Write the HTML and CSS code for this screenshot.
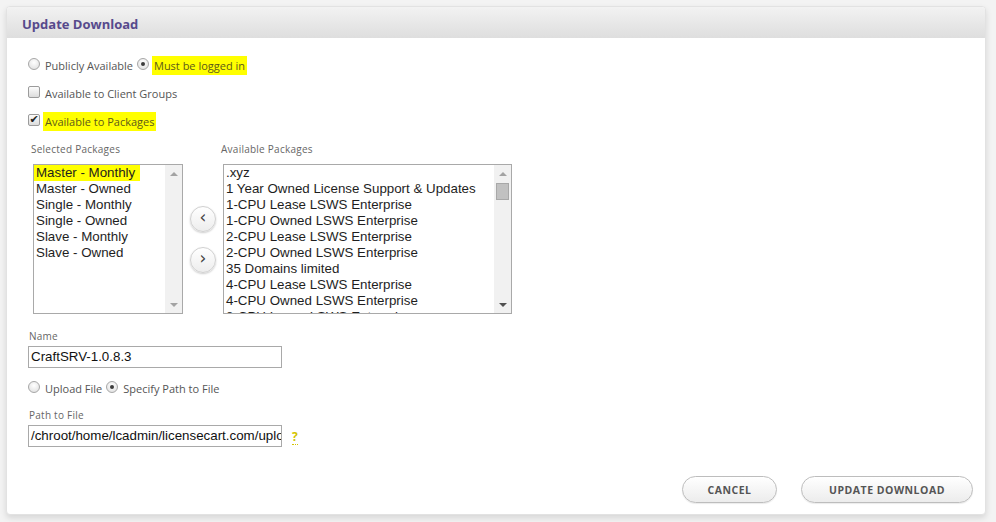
FILE: index.html
```html
<!DOCTYPE html>
<html>
<head>
<meta charset="utf-8">
<title>Update Download</title>
<link rel="stylesheet" href="styles.css">
</head>
<body>
<div class="panel">
  <div class="panel-head"><h1 class="title">Update Download</h1></div>
  <div class="panel-body">
    <div class="row">
      <span class="radio"></span><span class="lbl">Publicly Available</span>
      <span class="radio on"></span><span class="lbl hl">Must be logged in</span>
    </div>
    <div class="row">
      <span class="check"></span><span class="lbl">Available to Client Groups</span>
    </div>
    <div class="row">
      <span class="check on">&#10004;</span><span class="lbl hl">Available to Packages</span>
    </div>

    <div class="packages">
      <div class="pcol">
        <div class="flabel">Selected Packages</div>
        <div class="listbox small">
          <div class="opts">
            <div class="opt"><span class="hlopt">Master - Monthly</span></div>
            <div class="opt">Master - Owned</div>
            <div class="opt">Single - Monthly</div>
            <div class="opt">Single - Owned</div>
            <div class="opt">Slave - Monthly</div>
            <div class="opt">Slave - Owned</div>
          </div>
          <div class="sbar"><span class="arr up"></span><span class="track"></span><span class="arr down"></span></div>
        </div>
      </div>
      <div class="movers">
        <span class="mv">&#8249;</span>
        <span class="mv">&#8250;</span>
      </div>
      <div class="pcol">
        <div class="flabel">Available Packages</div>
        <div class="listbox big">
          <div class="opts">
            <div class="opt">.xyz</div>
            <div class="opt">1 Year Owned License Support &amp; Updates</div>
            <div class="opt">1-CPU Lease LSWS Enterprise</div>
            <div class="opt">1-CPU Owned LSWS Enterprise</div>
            <div class="opt">2-CPU Lease LSWS Enterprise</div>
            <div class="opt">2-CPU Owned LSWS Enterprise</div>
            <div class="opt">35 Domains limited</div>
            <div class="opt">4-CPU Lease LSWS Enterprise</div>
            <div class="opt">4-CPU Owned LSWS Enterprise</div>
            <div class="opt">8-CPU Lease LSWS Enterprise</div>
          </div>
          <div class="sbar"><span class="arr up"></span><span class="track"><span class="thumb"></span></span><span class="arr down dark"></span></div>
        </div>
      </div>
    </div>

    <div class="flabel name-l">Name</div>
    <div class="input">CraftSRV-1.0.8.3</div>

    <div class="row row2">
      <span class="radio"></span><span class="lbl">Upload File</span>
      <span class="radio on"></span><span class="lbl">Specify Path to File</span>
    </div>

    <div class="flabel path-l">Path to File</div>
    <div class="pathrow">
      <div class="input clip">/chroot/home/lcadmin/licensecart.com/uploads/CraftSRV-1.0.8.3.zip</div>
      <span class="help">?</span>
    </div>

    <div class="actions">
      <span class="btn cancel">Cancel</span>
      <span class="btn update">Update Download</span>
    </div>
  </div>
</div>
</body>
</html>
```

FILE: styles.css
```css
html, body { margin: 0; padding: 0; }
body {
  background: #f3f3f3;
  font-family: "Open Sans", "DejaVu Sans", sans-serif;
  color: #555;
  width: 996px;
  height: 522px;
  overflow: hidden;
}
.panel {
  margin: 6px 0 0 6px;
  width: 980px;
  height: 509px;
  background: #fff;
  border: 1px solid #e2e2e2;
  border-radius: 4px;
  box-sizing: border-box;
  box-shadow: 0 3px 6px rgba(0,0,0,0.12);
  overflow: hidden;
}
.panel-head {
  height: 31px;
  background: linear-gradient(#f2f2f2, #dedede);
  display: flex;
  align-items: center;
  padding-left: 15px;
}
.title {
  margin: 0;
  font-size: 13px;
  font-weight: 700;
  color: #574a8c;
  line-height: 16px;
  padding-top: 2px;
}
.panel-body {
  padding: 17px 12px 0 21px;
}
.row {
  display: flex;
  align-items: center;
  height: 20px;
  margin-bottom: 8px;
}
.lbl {
  font-size: 11px;
  line-height: 16px;
  margin-left: 5px;
  margin-right: 4px;
  padding-top: 1px;
}
.lbl.hl {
  background: #ffff00;
  padding: 2px 2px 1px;
  margin-left: 3px;
  color: #5d5a1a;
}
.radio {
  width: 12px;
  height: 12px;
  border-radius: 50%;
  border: 1px solid #a7a7a7;
  box-sizing: border-box;
  background: radial-gradient(circle at 50% 35%, #ffffff, #dcdcdc);
  display: inline-flex;
  align-items: center;
  justify-content: center;
  margin-top: -3px;
}
.radio.on::after {
  content: "";
  width: 4px;
  height: 4px;
  border-radius: 50%;
  background: #3c3c3c;
}
.check {
  width: 12px;
  height: 12px;
  border: 1px solid #9b9b9b;
  border-radius: 2px;
  box-sizing: border-box;
  background: linear-gradient(#fdfdfd, #dcdcdc);
  display: inline-flex;
  align-items: center;
  justify-content: center;
  font-size: 11px;
  line-height: 10px;
  color: #222;
  font-family: "DejaVu Sans", sans-serif;
  margin-top: -3px;
}
.packages {
  display: flex;
  align-items: flex-end;
  padding-left: 3px;
  margin-top: 11px;
}
.pcol { display: flex; flex-direction: column; }
.flabel {
  font-size: 10px;
  line-height: 14px;
  color: #666;
  letter-spacing: 0.25px;
}
.listbox {
  margin-top: 8px;
  margin-left: 2px;
  height: 150px;
  border: 1px solid #a9a9a9;
  box-sizing: border-box;
  display: flex;
  background: #fff;
}
.listbox.small { width: 150px; }
.listbox.big { width: 289px; margin-left: 2px; }
.opts {
  flex: 1;
  overflow: hidden;
  font-family: "Liberation Sans", Arial, sans-serif;
  font-size: 13.33px;
  color: #1e1e1e;
}
.opt {
  height: 16px;
  line-height: 16px;
  padding-left: 2px;
  white-space: nowrap;
}
.hlopt {
  background: #ffff00;
  display: inline-block;
  margin-left: -2px;
  padding: 0 5px 0 2px;
}
.sbar {
  width: 17px;
  background: #f1f1f1;
  display: flex;
  flex-direction: column;
  align-items: center;
}
.arr {
  width: 17px;
  height: 17px;
  display: flex;
  align-items: center;
  justify-content: center;
}
.arr::after {
  content: "";
  border-left: 4px solid transparent;
  border-right: 4px solid transparent;
}
.arr.up::after { border-bottom: 4px solid #a3a3a3; }
.arr.down::after { border-top: 4px solid #a3a3a3; }
.arr.down.dark::after { border-top-color: #505050; }
.track { flex: 1; width: 17px; display: flex; justify-content: center; }
.thumb {
  width: 13px;
  height: 17px;
  margin-top: 1px;
  background: #c1c1c1;
  border: 1px solid #a8a8a8;
  box-sizing: border-box;
}
.movers {
  display: flex;
  flex-direction: column;
  gap: 15px;
  height: 150px;
  justify-content: center;
  margin: 0 5px 0 7px;
}
.mv {
  width: 26px;
  height: 26px;
  border-radius: 50%;
  background: linear-gradient(#ffffff, #ededed);
  border: 1px solid #d0d0d0;
  box-sizing: border-box;
  box-shadow: 0 1px 2px rgba(0,0,0,0.2);
  display: flex;
  align-items: center;
  justify-content: center;
  font-family: "DejaVu Sans", sans-serif;
  font-size: 17px;
  color: #444;
  line-height: 16px;
  padding-bottom: 3px;
}
.name-l { margin-top: 15px; padding-left: 1px; }
.input {
  margin-top: 3px;
  width: 254px;
  height: 22px;
  border: 1px solid #a9a9a9;
  box-sizing: border-box;
  font-family: "Liberation Sans", Arial, sans-serif;
  font-size: 13.33px;
  color: #111;
  line-height: 20px;
  padding-left: 2px;
  white-space: nowrap;
}
.clip { overflow: hidden; }
.row2 { margin-top: 10px; margin-bottom: 0; }
.path-l { margin-top: 10px; padding-left: 1px; }
.pathrow { display: flex; align-items: flex-end; }
.help {
  margin-left: 10px;
  font-size: 12px;
  font-weight: 700;
  color: #d4c300;
  line-height: 14px;
  border-bottom: 1px dotted #d4c300;
  margin-bottom: 2px;
}
.actions {
  display: flex;
  justify-content: flex-end;
  gap: 24px;
  margin-top: 29px;
}
.btn {
  height: 27px;
  border-radius: 14px;
  border: 1px solid #bdbdbd;
  box-sizing: border-box;
  background: linear-gradient(#ffffff, #ececec);
  box-shadow: 0 1px 1px rgba(0,0,0,0.08);
  display: flex;
  align-items: center;
  justify-content: center;
  font-size: 10.5px;
  font-weight: 700;
  text-transform: uppercase;
  color: #555;
  letter-spacing: 0.5px;
}
.btn.cancel { width: 95px; }
.btn.update { width: 172px; }
```
